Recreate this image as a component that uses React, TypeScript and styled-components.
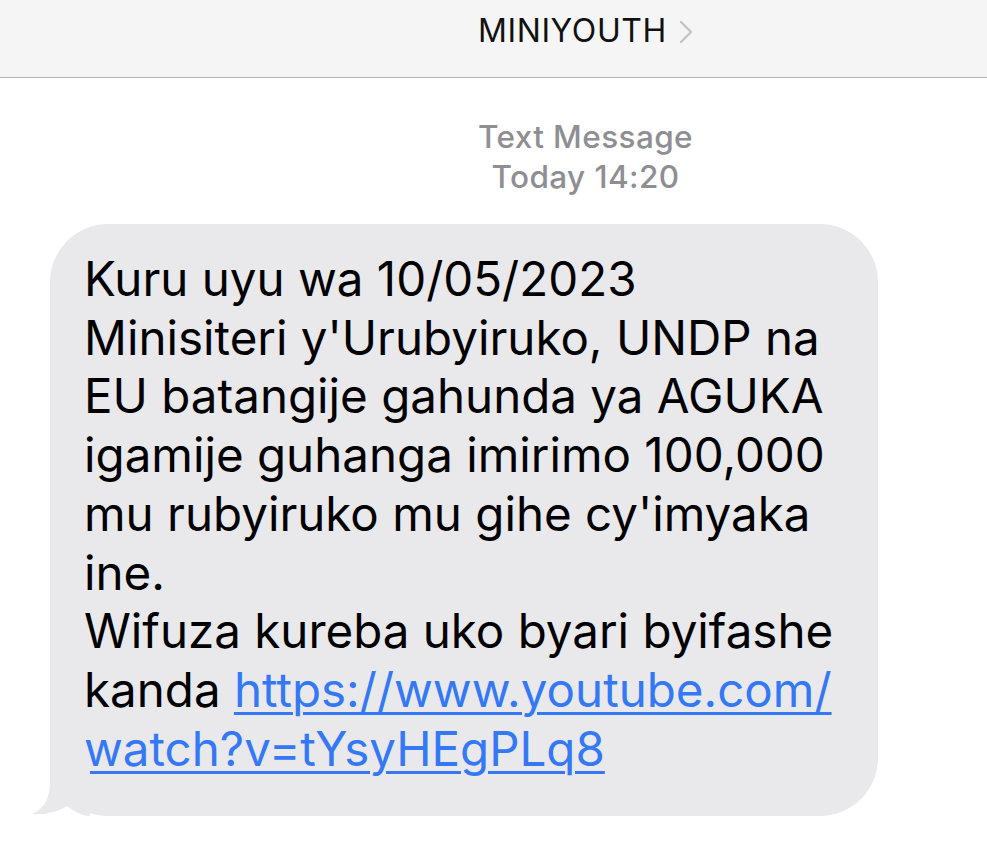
import React from "react";
import styled, { createGlobalStyle } from "styled-components";

const GlobalStyle = createGlobalStyle`
    html, body {
        margin: 0;
        padding: 0;
        background: #ffffff;
    }

    body {
        font-family: Inter, "Liberation Sans", sans-serif;
        -webkit-font-smoothing: antialiased;
    }
`;

const Page = styled.div`
    display: flex;
    flex-direction: column;
    width: 987px;
    height: 854px;
    overflow: hidden;
    background: #ffffff;
`;

const Header = styled.header`
    display: flex;
    align-items: center;
    justify-content: center;
    height: 78px;
    padding-left: 184px;
    padding-bottom: 16px;
    box-sizing: border-box;
    background: #f5f5f5;
    border-bottom: 1px solid #b3b3b3;
`;

const ContactName = styled.span`
    font-size: 32px;
    font-weight: 400;
    color: #111111;
    letter-spacing: 0.6px;
`;

const Chevron = styled.svg`
    margin-left: 12px;
    margin-top: 2px;
`;

const Stamp = styled.div`
    display: flex;
    flex-direction: column;
    align-items: center;
    padding-left: 184px;
    margin-top: 39px;

    font-size: 31.5px;
    line-height: 40px;
    font-weight: 500;
    letter-spacing: 0.4px;
    color: #8e8e93;
`;

const Thread = styled.div`
    display: flex;
    padding: 27px 0 0 50px;
`;

const Bubble = styled.div`
    position: relative;
    width: 828px;
    box-sizing: border-box;
    padding: 26px 0 38px 34px;
    border-radius: 58px;
    background: #e9e9eb;

    font-size: 47.5px;
    line-height: 58.7px;
    color: #000000;
`;

const Line = styled.div`
    white-space: nowrap;
`;

const Link = styled.a`
    color: #3478f6;
    text-decoration: underline;
    text-decoration-thickness: 3px;
    text-underline-offset: 5px;
`;

const Tail = styled.svg`
    position: absolute;
    left: -20px;
    bottom: 0;
`;

export default function App() {
    return (
        <Page>
            <GlobalStyle />
            <Header>
                <ContactName>MINIYOUTH</ContactName>
                <Chevron width="14" height="24" viewBox="0 0 14 24">
                    <path d="M2 2 L12 12 L2 22" fill="none" stroke="#c4c4c7" strokeWidth="2.4" strokeLinecap="round" strokeLinejoin="round" />
                </Chevron>
            </Header>
            <Stamp>
                <span>Text Message</span>
                <span>Today 14:20</span>
            </Stamp>
            <Thread>
                <Bubble>
                    <Line>Kuru uyu wa 10/05/2023</Line>
                    <Line>Minisiteri y'Urubyiruko, UNDP na</Line>
                    <Line>EU batangije gahunda ya AGUKA</Line>
                    <Line>igamije guhanga imirimo 100,000</Line>
                    <Line>mu rubyiruko mu gihe cy'imyaka</Line>
                    <Line>ine.</Line>
                    <Line>Wifuza kureba uko byari byifashe</Line>
                    <Line>kanda <Link href="#">https://www.youtube.com/</Link></Line>
                    <Line><Link href="#">watch?v=tYsyHEgPLq8</Link></Line>
                    <Tail width="60" height="60" viewBox="0 0 60 60">
                        <path d="M20 0 L20 25 C20 45 12 54 2 58 C14 59 28 56 37 50 C45 56 52 60 60 60 L60 0 Z" fill="#e9e9eb" />
                    </Tail>
                </Bubble>
            </Thread>
        </Page>
    );
}
